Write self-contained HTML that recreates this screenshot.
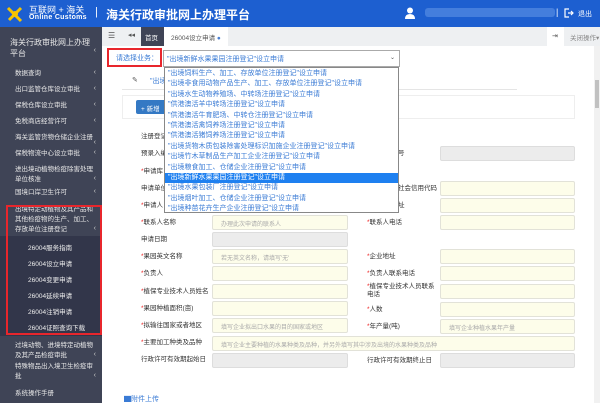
<!DOCTYPE html>
<html><head><meta charset="utf-8"><style>
*{margin:0;padding:0;box-sizing:border-box}
body{width:600px;height:403px;overflow:hidden;position:relative;background:#fff;font-family:"Liberation Sans","Noto Sans CJK SC",sans-serif;font-size:7px;color:#333}
.a{position:absolute}
#hd{left:0;top:0;width:600px;height:27px;background:#1d5fd0}
#sb{left:0;top:27px;width:102px;height:376px;background:#3f4456;color:#e8e8e8}
.si{position:absolute;left:15px;font-size:6.5px;line-height:10px;width:80px}
.ar{position:absolute;right:6px;font-size:7px;color:#ccc}
.sub{position:absolute;left:28px;font-size:6.5px;color:#eee}
.lb{position:absolute;font-size:6.5px;color:#333;line-height:8px}
.lb i{color:#e22;font-style:normal}
.in{position:absolute;height:15px;border:1px solid #e2e2d8;border-radius:2px;background:#fdfdea;font-size:6px;color:#aaa;padding:3px 0 0 8px}
.g{background:#ececec;border-color:#ddd}
.li{height:10.4px;line-height:10.4px;padding-left:3px;color:#3a7bd5;font-size:7px;white-space:nowrap;overflow:hidden}
</style></head><body>
<div id="hd" class="a">
 <svg class="a" style="left:5px;top:4px" width="20" height="20" viewBox="0 0 20 20"><path d="M3 4 L16 17 M16 4 L4 16" stroke="#f5c400" stroke-width="3"/><circle cx="10" cy="10" r="3" fill="#f5c400"/></svg>
 <div class="a" style="left:29px;top:3px;color:#fff;font-size:9px">互联网 + 海关</div>
 <div class="a" style="left:29px;top:14px;color:#fff;font-size:7px;font-weight:bold;letter-spacing:.3px">Online Customs</div>
 <div class="a" style="left:95px;top:6px;color:#fff;font-size:11px">|</div>
 <div class="a" style="left:106px;top:6px;color:#fff;font-size:12px;font-weight:bold">海关行政审批网上办理平台</div>
 <svg class="a" style="left:405px;top:7px" width="10" height="12" viewBox="0 0 10 12"><circle cx="5" cy="3.5" r="3" fill="#fff"/><path d="M0 12 Q0 7 5 7 Q10 7 10 12Z" fill="#fff"/></svg>
 <div class="a" style="left:425px;top:8px;width:130px;height:9px;background:#4f86e0;border-radius:3px;opacity:.8"></div>
 <div class="a" style="left:556px;top:7px;color:#fff;font-size:9px">|</div>
 <svg class="a" style="left:564px;top:8px" width="10" height="10" viewBox="0 0 10 10"><path d="M5 1H1V9H5M4 5H9M7 3L9 5L7 7" stroke="#fff" fill="none" stroke-width="1.2"/></svg>
 <div class="a" style="left:578px;top:9px;color:#fff;font-size:7px">退出</div>
</div>
<div id="sb" class="a">
 <div class="si" style="top:10px;font-size:8px;line-height:11px;left:10px;width:80px">海关行政审批网上办理平台</div><div class="ar" style="top:20px">‹</div>
 <div class="si" style="top:42px">数据查询</div><div class="ar" style="top:42px">‹</div>
 <div class="si" style="top:58px">出口监管仓库设立审批</div><div class="ar" style="top:58px">‹</div>
 <div class="si" style="top:74px">保税仓库设立审批</div><div class="ar" style="top:74px">‹</div>
 <div class="si" style="top:90px">免税商店经营许可</div><div class="ar" style="top:90px">‹</div>
 <div class="si" style="top:106px">海关监管货物仓储企业注册</div><div class="ar" style="top:112px">‹</div>
 <div class="si" style="top:122px">保税物流中心设立审批</div><div class="ar" style="top:122px">‹</div>
 <div class="si" style="top:138px">进出境动植物检疫除害处理单位核准</div><div class="ar" style="top:148px">‹</div>
 <div class="si" style="top:161px">国境口岸卫生许可</div><div class="ar" style="top:161px">‹</div>
 <div class="si" style="top:178px">出境特定动植物及其产品和其他检疫物的生产、加工、存放单位注册登记</div><div class="ar" style="top:198px">‹</div>
 <div class="a" style="left:0;top:209px;width:102px;height:100px;background:#32364a"></div>
 <div class="sub" style="top:215px">26004服务指南</div>
 <div class="sub" style="top:231px">26004设立申请</div>
 <div class="sub" style="top:247px">26004变更申请</div>
 <div class="sub" style="top:263px">26004延续申请</div>
 <div class="sub" style="top:279px">26004注销申请</div>
 <div class="sub" style="top:295px">26004证照查询下载</div>
 <div class="si" style="top:314px">过境动物、进境特定动植物及其产品检疫审批</div><div class="ar" style="top:324px">‹</div>
 <div class="si" style="top:335px">特殊物品出入境卫生检疫审批</div><div class="ar" style="top:345px">‹</div>
 <div class="si" style="top:362px">系统操作手册</div>
</div>
<div class="a" style="left:6px;top:205px;width:96px;height:130px;border:2px solid #e8262c"></div>
<!-- tabs -->
<div class="a" style="left:102px;top:27px;width:498px;height:19px;background:#eef0f2"></div>
<div class="a" style="left:108px;top:31px;font-size:8px;color:#555">☰</div>
<div class="a" style="left:128px;top:31px;font-size:7px;color:#555">◂◂</div>
<div class="a" style="left:141px;top:27px;width:23px;height:19px;background:#3f4456;color:#fff;font-size:6.5px;padding:5px 0 0 4px">首页</div>
<div class="a" style="left:164px;top:27px;width:64px;height:19px;background:#fff;color:#555;font-size:6.5px;padding:5px 0 0 7px">26004设立申请 <span style="color:#4a7fd0">●</span></div>
<div class="a" style="left:547px;top:27px;width:17px;height:19px;background:#fff;font-size:7px;padding:5px 0 0 5px;color:#555">⇥</div>
<div class="a" style="left:570px;top:32px;font-size:6.5px;color:#888">关闭操作▾</div>
<!-- scrollbar -->
<div class="a" style="left:594px;top:46px;width:6px;height:357px;background:#f1f1f1"></div>
<div class="a" style="left:595px;top:80px;width:4px;height:28px;background:#c1c1c1"></div>
<!-- content -->
<div class="a" style="left:122px;top:89px;width:395px;height:1px;background:#e5e5e5"></div>
<div class="a" style="left:132px;top:76px;font-size:7px;color:#555">✎</div>
<div class="a" style="left:150px;top:76px;font-size:7px;color:#3a7bd5">"出境</div>
<div class="a" style="left:122px;top:95px;width:453px;height:24px;border:1px solid #eee"></div>
<div class="a" style="left:136px;top:100px;width:36px;height:14px;background:#3479c4;border-radius:2px;color:#fff;font-size:6.5px;padding:3px 0 0 5px">+ 新增</div>
<div class="lb" style="left:141px;top:133px">注册登记</div>
<div class="lb" style="left:141px;top:150px">预录入编号</div>
<div class="lb" style="left:398px;top:150px">号</div>
<div class="in g" style="left:440px;top:146px;width:135px"></div>
<div class="lb" style="left:141px;top:168px"><i>*</i>申请库</div>
<div class="lb" style="left:141px;top:185px">申请单位</div>
<div class="lb" style="left:398px;top:185px">社会信用代码</div>
<div class="in" style="left:440px;top:181px;width:135px"></div>
<div class="lb" style="left:141px;top:202px"><i>*</i>申请人</div>
<div class="lb" style="left:398px;top:202px">址</div>
<div class="in" style="left:440px;top:198px;width:135px"></div>
<div class="lb" style="left:141px;top:219px"><i>*</i>联系人名称</div>
<div class="in" style="left:212px;top:215px;width:136px">办理此次申请的联系人</div>
<div class="lb" style="left:367px;top:219px"><i>*</i>联系人电话</div>
<div class="in" style="left:440px;top:215px;width:135px"></div>
<div class="lb" style="left:141px;top:236px">申请日期</div>
<div class="in g" style="left:212px;top:232px;width:136px"></div>
<div class="lb" style="left:141px;top:253px"><i>*</i>果园英文名称</div>
<div class="in" style="left:212px;top:249px;width:136px">若无英文名称，请填写'无'</div>
<div class="lb" style="left:367px;top:253px"><i>*</i>企业地址</div>
<div class="in" style="left:440px;top:249px;width:135px"></div>
<div class="lb" style="left:141px;top:270px"><i>*</i>负责人</div>
<div class="in" style="left:212px;top:266px;width:136px"></div>
<div class="lb" style="left:367px;top:270px"><i>*</i>负责人联系电话</div>
<div class="in" style="left:440px;top:266px;width:135px"></div>
<div class="lb" style="left:141px;top:288px"><i>*</i>植保专业技术人员姓名</div>
<div class="in" style="left:212px;top:284px;width:136px"></div>
<div class="lb" style="left:367px;top:283px;width:72px"><i>*</i>植保专业技术人员联系电话</div>
<div class="in" style="left:440px;top:284px;width:135px"></div>
<div class="lb" style="left:141px;top:305px"><i>*</i>果园种植面积(亩)</div>
<div class="in" style="left:212px;top:301px;width:136px"></div>
<div class="lb" style="left:367px;top:306px"><i>*</i>人数</div>
<div class="in" style="left:440px;top:302px;width:135px"></div>
<div class="lb" style="left:141px;top:322px"><i>*</i>拟输往国家或者地区</div>
<div class="in" style="left:212px;top:318px;width:136px">填写企业拟出口水果的目的国家或地区</div>
<div class="lb" style="left:367px;top:323px"><i>*</i>年产量(吨)</div>
<div class="in" style="left:440px;top:319px;width:135px">填写企业种植水果年产量</div>
<div class="lb" style="left:141px;top:339px"><i>*</i>主要加工种类及品种</div>
<div class="in" style="left:212px;top:336px;width:363px">填写企业主要种植的水果种类及品种，并另外填写其中涉及出境的水果种类及品种</div>
<div class="lb" style="left:141px;top:356px">行政许可有效期起始日</div>
<div class="in g" style="left:212px;top:353px;width:136px"></div>
<div class="lb" style="left:367px;top:357px">行政许可有效期终止日</div>
<div class="in g" style="left:440px;top:353px;width:135px"></div>
<div class="a" style="left:124px;top:394px;font-size:7px;color:#3a7bd5">▇附件上传</div>
<!-- select -->
<div class="a" style="left:107px;top:48px;width:55px;height:19px;border:2px solid #e8262c"></div>
<div class="a" style="left:116px;top:53px;font-size:7px;color:#3a7bd5">请选择业务：</div>
<div class="a" style="left:163px;top:50px;width:237px;height:17px;border:1px solid #aaa;background:#fff;font-size:7px;color:#3a7bd5;padding:3px 0 0 3px">"出境新鲜水果果园注册登记"设立申请<span style="position:absolute;right:4px;top:3px;color:#555;font-size:6px">⌄</span></div>
<div class="a" style="left:164px;top:67px;width:235px;height:146px;border:1px solid #888;background:#fff;padding-top:1px">
<div class="li">"出境饲料生产、加工、存放单位注册登记"设立申请</div>
<div class="li">"出境非食用动物产品生产、加工、存放单位注册登记"设立申请</div>
<div class="li">"出境水生动物养殖场、中转场注册登记"设立申请</div>
<div class="li">"供港澳活羊中转场注册登记"设立申请</div>
<div class="li">"供港澳活牛育肥场、中转仓注册登记"设立申请</div>
<div class="li">"供港澳活禽饲养场注册登记"设立申请</div>
<div class="li">"供港澳活猪饲养场注册登记"设立申请</div>
<div class="li">"出境货物木质包装除害处理标识加施企业注册登记"设立申请</div>
<div class="li">"出境竹木草制品生产加工企业注册登记"设立申请</div>
<div class="li">"出境粮食加工、仓储企业注册登记"设立申请</div>
<div class="li" style="background:#1e80f0;color:#fff">"出境新鲜水果果园注册登记"设立申请</div>
<div class="li">"出境水果包装厂注册登记"设立申请</div>
<div class="li">"出境烟叶加工、仓储企业注册登记"设立申请</div>
<div class="li">"出境种苗花卉生产企业注册登记"设立申请</div>
</div>
</body></html>
